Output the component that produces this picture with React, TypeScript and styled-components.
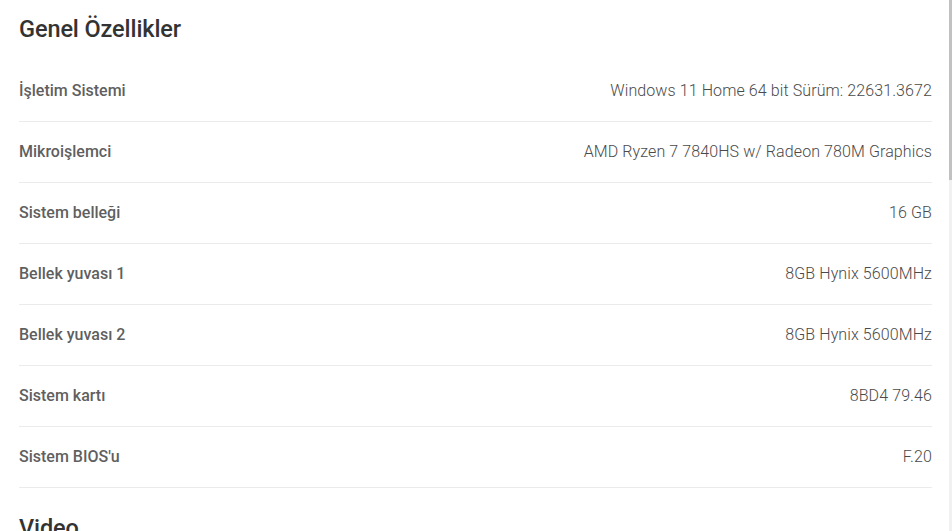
import React from "react";
import styled, { createGlobalStyle } from "styled-components";

const Global = createGlobalStyle`
  html, body { margin: 0; padding: 0; background: #fff; overflow: hidden; }
  body { font-family: Roboto, "Noto Sans", sans-serif; }
`;

const Page = styled.div`
  padding: 0 20px 0 19px;
  width: 913px;
`;

const SectionTitle = styled.h2`
  margin: 0;
  height: 61px;
  display: flex;
  align-items: center;
  padding-bottom: 4px;
  box-sizing: border-box;
  font-size: 23.5px;
  font-weight: 500;
  color: #333;
  letter-spacing: -0.1px;
`;

const NextTitle = styled(SectionTitle)`
  margin-top: 26px;
  height: auto;
  padding: 0;
`;

const Row = styled.div`
  display: flex;
  justify-content: space-between;
  align-items: center;
  height: 60px;
  padding-bottom: 1px;
  box-sizing: border-box;
  height: 61px;
  border-bottom: 1px solid #ebebeb;
  font-size: 16px;
`;

const Label = styled.span`
  color: #5f5f5f;
  font-weight: 500;
  letter-spacing: 0px;
`;

const Value = styled.span`
  color: #4a4a4a;
  font-weight: 300;
  letter-spacing: 0.1px;
`;

const ScrollTrack = styled.div`
  position: fixed;
  top: 0;
  right: 0;
  width: 3px;
  height: 100vh;
  background: #f1f1f1;
`;

const ScrollThumb = styled.div`
  width: 3px;
  height: 180px;
  background: #c1c1c1;
`;

const rows: [string, string][] = [
  ["İşletim Sistemi", "Windows 11 Home 64 bit Sürüm: 22631.3672"],
  ["Mikroişlemci", "AMD Ryzen 7 7840HS w/ Radeon 780M Graphics"],
  ["Sistem belleği", "16 GB"],
  ["Bellek yuvası 1", "8GB Hynix 5600MHz"],
  ["Bellek yuvası 2", "8GB Hynix 5600MHz"],
  ["Sistem kartı", "8BD4 79.46"],
  ["Sistem BIOS'u", "F.20"],
];

export default function App() {
  return (
    <>
      <Global />
      <Page>
        <SectionTitle>Genel Özellikler</SectionTitle>
        {rows.map(([l, v]) => (
          <Row key={l}>
            <Label>{l}</Label>
            <Value>{v}</Value>
          </Row>
        ))}
        <NextTitle>Video</NextTitle>
      </Page>
      <ScrollTrack>
        <ScrollThumb />
      </ScrollTrack>
    </>
  );
}
